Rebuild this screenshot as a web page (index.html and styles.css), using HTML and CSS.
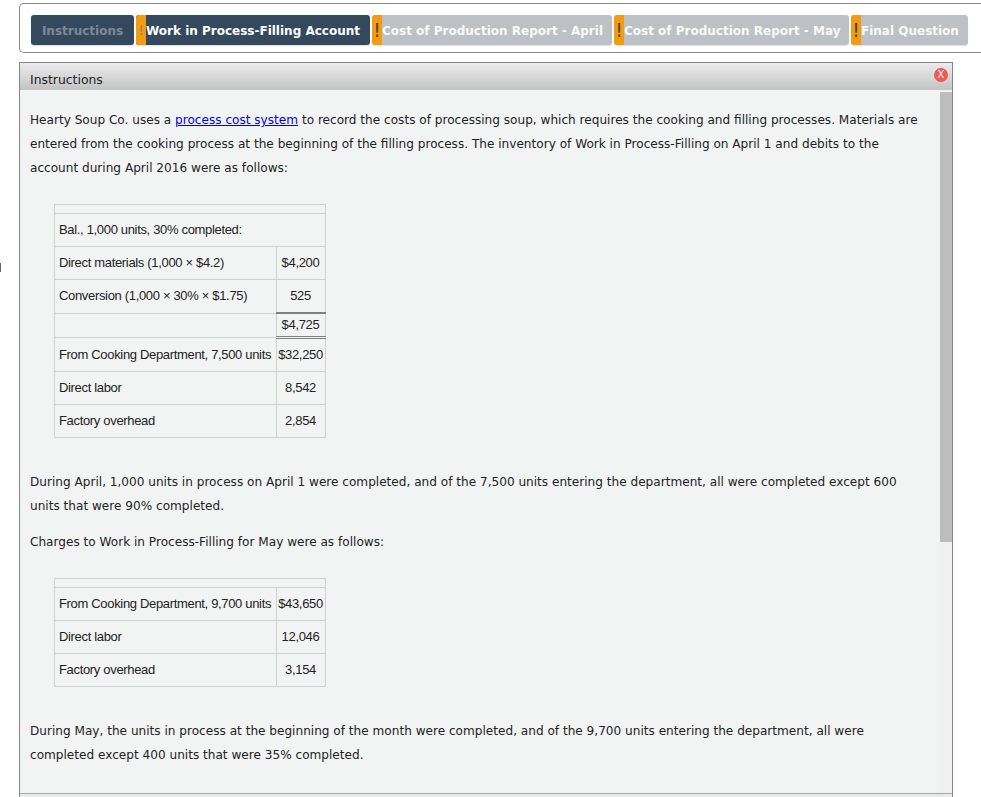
FILE: index.html
```html
<!DOCTYPE html>
<html lang="en">
<head>
<meta charset="utf-8">
<title>Instructions</title>
<link rel="stylesheet" href="styles.css">
</head>
<body>
<span class="edge-mark"></span>
<nav class="tabbar">
  <div class="tab tab-active tab-first"><span class="tab-label tab-label-muted">Instructions</span></div>
  <div class="tab tab-active"><span class="flag flag-dim">!</span><span class="tab-label">Work in Process-Filling Account</span></div>
  <div class="tab"><span class="flag">!</span><span class="tab-label">Cost of Production Report - April</span></div>
  <div class="tab"><span class="flag">!</span><span class="tab-label">Cost of Production Report - May</span></div>
  <div class="tab"><span class="flag">!</span><span class="tab-label">Final Question</span></div>
</nav>
<section class="panel">
  <header class="panel-head">
    <span>Instructions</span>
    <span class="close">X</span>
  </header>
  <div class="panel-main">
    <div class="content">
      <p class="para">Hearty Soup Co. uses a <a href="#">process cost system</a> to record the costs of processing soup, which requires the cooking and filling processes. Materials are entered from the cooking process at the beginning of the filling process. The inventory of Work in Process-Filling on April 1 and debits to the account during April 2016 were as follows:</p>
      <table class="ledger ledger-april">
        <colgroup><col class="col-label"><col class="col-num"></colgroup>
        <tr class="spacer"><td colspan="2"></td></tr>
        <tr><td colspan="2">Bal., 1,000 units, 30% completed:</td></tr>
        <tr><td>Direct materials (1,000 × $4.2)</td><td class="num">$4,200</td></tr>
        <tr><td>Conversion (1,000 × 30% × $1.75)</td><td class="num">525</td></tr>
        <tr class="total"><td></td><td class="num sum">$4,725</td></tr>
        <tr><td>From Cooking Department, 7,500 units</td><td class="num">$32,250</td></tr>
        <tr><td>Direct labor</td><td class="num">8,542</td></tr>
        <tr><td>Factory overhead</td><td class="num">2,854</td></tr>
      </table>
      <p class="para para-after">During April, 1,000 units in process on April 1 were completed, and of the 7,500 units entering the department, all were completed except 600 units that were 90% completed.</p>
      <p class="para para-next">Charges to Work in Process-Filling for May were as follows:</p>
      <table class="ledger ledger-may">
        <colgroup><col class="col-label"><col class="col-num"></colgroup>
        <tr class="spacer"><td colspan="2"></td></tr>
        <tr><td>From Cooking Department, 9,700 units</td><td class="num">$43,650</td></tr>
        <tr><td>Direct labor</td><td class="num">12,046</td></tr>
        <tr><td>Factory overhead</td><td class="num">3,154</td></tr>
      </table>
      <p class="para para-after">During May, the units in process at the beginning of the month were completed, and of the 9,700 units entering the department, all were completed except 400 units that were 35% completed.</p>
    </div>
    <div class="scrolltrack"><div class="scrollthumb"></div></div>
  </div>
  <div class="panel-foot"></div>
</section>
</body>
</html>
```

FILE: styles.css
```css
html, body {
  margin: 0;
  height: 797px;
  overflow: hidden;
  background: #fff;
}
body {
  font-family: "DejaVu Sans", Verdana, sans-serif;
  color: #222;
  padding: 3px 0 0 19px;
  box-sizing: border-box;
}
.edge-mark {
  position: absolute;
  left: 0;
  top: 263px;
  width: 1px;
  height: 9px;
  background: #666;
}
.tabbar {
  display: grid;
  grid-template-columns: 103px 234px 240px 235px 117px;
  gap: 2px;
  height: 50px;
  box-sizing: border-box;
  padding: 11px 0 0 11px;
  border: 1px solid #8a8a8a;
  border-right: 0;
  border-radius: 5px 0 0 5px;
}
.tab {
  display: flex;
  align-items: center;
  height: 30px;
  background: #bdc1c5;
  border-radius: 3px;
  box-shadow: 0 1px 1px rgba(0,0,0,.12);
  white-space: nowrap;
}
.tab-active {
  background: #34495e;
}
.tab-first {
  justify-content: center;
}
.flag {
  width: 10px;
  height: 30px;
  background: #f39c12;
  color: #4a4a4a;
  border-radius: 3px 0 0 3px;
  font: 20px/30px "DejaVu Sans", sans-serif;
  text-align: center;
  flex: none;
}
.flag-dim {
  font-size: 14px;
  color: #9a8560;
}
.tab-label {
  position: relative;
  top: 1px;
  font-size: 12px;
  font-weight: 700;
  color: #fff;
  opacity: .92;
}
.tab-active .tab-label {
  opacity: 1;
}
.tab-active .tab-label-muted {
  color: #7f8a95;
}
.panel {
  width: 934px;
  box-sizing: border-box;
  margin-top: 9px;
  border: 1px solid #858585;
  border-bottom: 0;
  background: #f2f4f4;
}
.panel-head {
  display: flex;
  align-items: center;
  justify-content: space-between;
  box-sizing: border-box;
  height: 27px;
  padding: 6px 4px 0 10px;
  font-size: 12.4px;
  color: #222;
  background: linear-gradient(#ececec, #c3c3c3);
}
.close {
  width: 14px;
  height: 14px;
  margin-top: -10px;
  border-radius: 50%;
  background: #ef5a50;
  color: #fff;
  font-size: 10px;
  line-height: 14px;
  text-align: center;
}
.panel-main {
  display: flex;
  height: 703px;
  overflow: hidden;
}
.content {
  flex: 1;
  min-width: 0;
  padding: 18px 20px 0 10px;
  font-size: 12.1px;
  line-height: 24px;
}
.para {
  margin: 0;
}
.para a {
  color: #00e;
}
.para-after {
  margin-top: 32px;
}
.para-next {
  margin-top: 12px;
}
.scrolltrack {
  width: 12px;
  margin-top: 2px;
  background: #f0f0f0;
  flex: none;
}
.scrollthumb {
  height: 450px;
  background: #bdbdbd;
}
.panel-foot {
  height: 4px;
  border-top: 1px solid #a5a5a5;
  background: #e9e9e9;
}
.ledger {
  border-collapse: collapse;
  table-layout: fixed;
  margin: 24px 0 0 24px;
  font-family: "Liberation Sans", Arial, sans-serif;
  font-size: 13px;
  letter-spacing: -0.33px;
  line-height: 16px;
  width: 271px;
  color: #222;
}
.col-label {
  width: 222px;
}
.col-num {
  width: 49px;
}
.ledger td {
  border: 1px solid #ccd1d1;
  padding: 8px 4px;
  white-space: nowrap;
}
.ledger td.num {
  text-align: center;
  padding: 8px 1px 8px 0;
}
.ledger .spacer td {
  padding: 0;
  height: 8px;
}
.ledger .total td {
  padding: 4px 4px 3px;
}
.ledger td.sum {
  padding: 3px 1px 3px 0;
  border-top: 2px solid #808080;
  border-bottom: 3px double #808080;
}
```
